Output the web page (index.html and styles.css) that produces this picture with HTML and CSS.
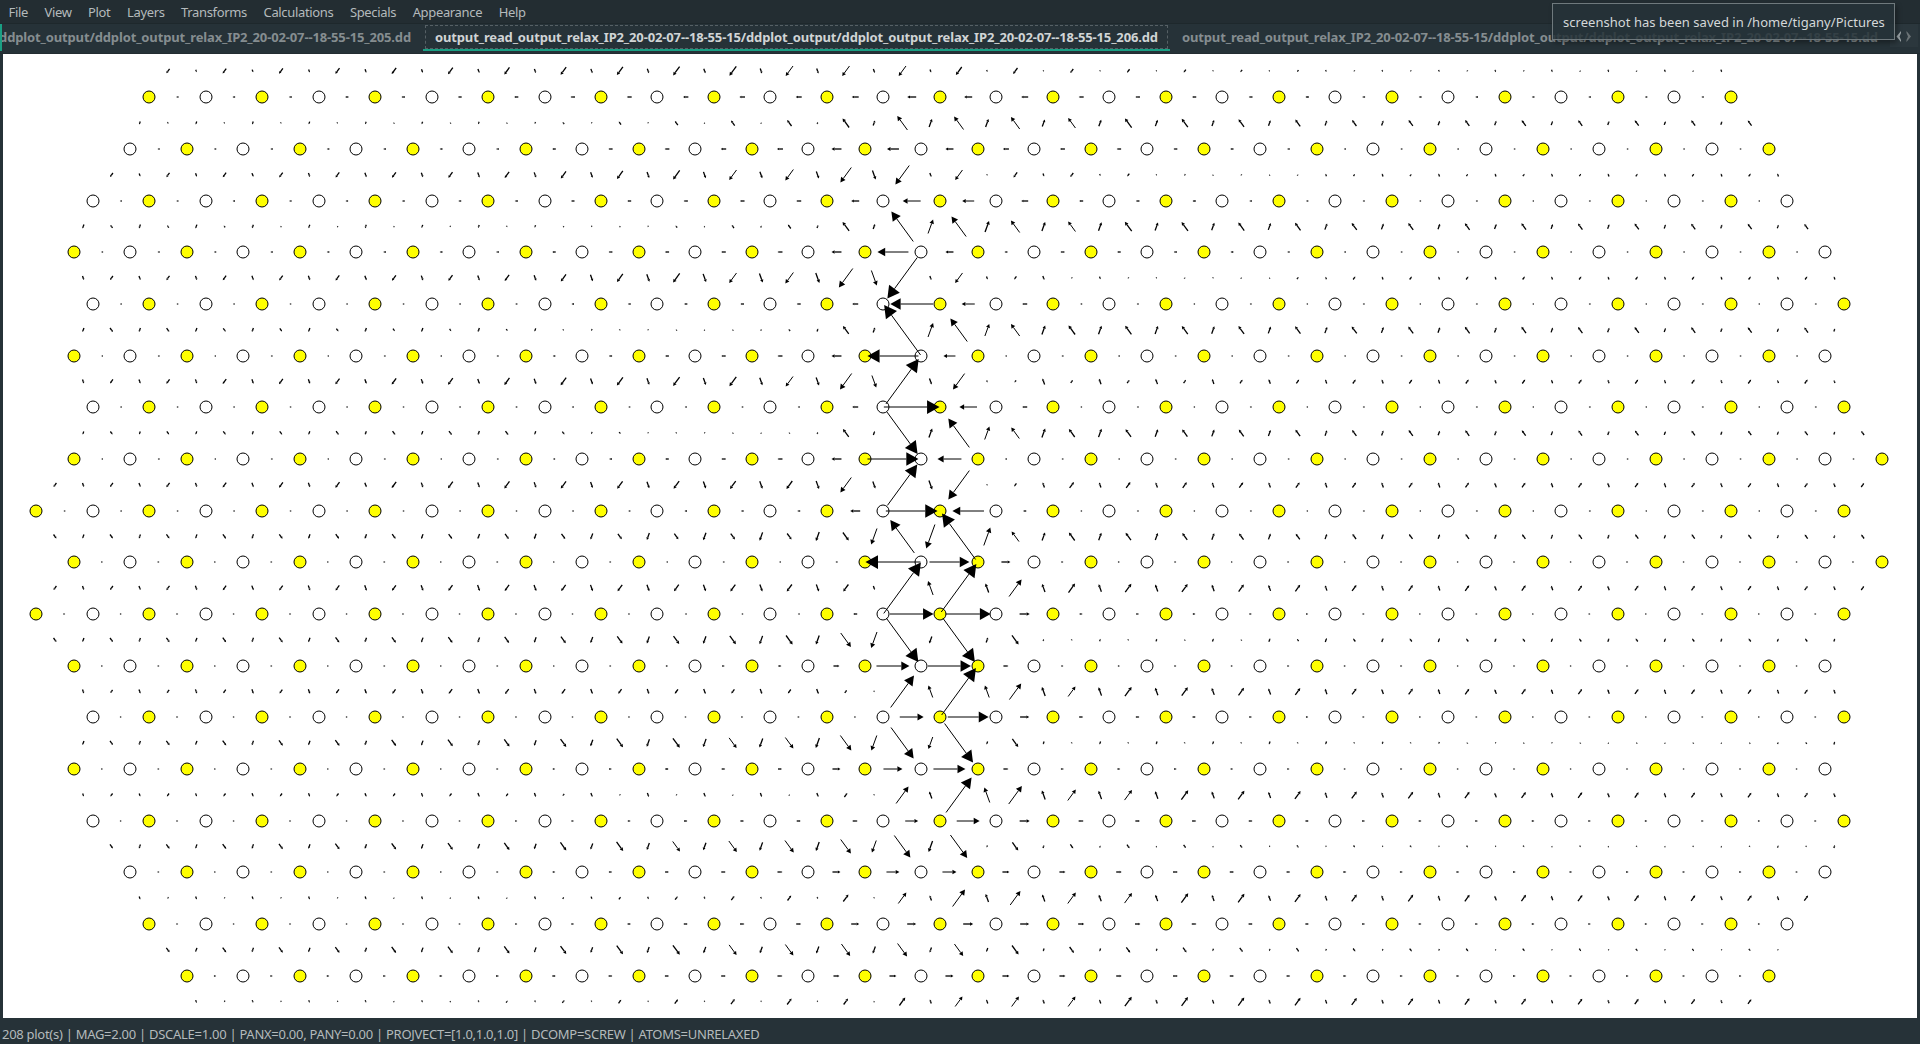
FILE: index.html
```html
<!DOCTYPE html>
<html lang="en">
<head>
<meta charset="utf-8">
<title>ddplot</title>
<link rel="stylesheet" href="styles.css">
</head>
<body>
<div class="window">
  <nav class="menubar">
    <span class="menu">File</span><span class="menu">View</span><span class="menu">Plot</span><span class="menu">Layers</span><span class="menu">Transforms</span><span class="menu">Calculations</span><span class="menu">Specials</span><span class="menu">Appearance</span><span class="menu">Help</span>
  </nav>
  <div class="tabbar">
    <div class="tab tab-first"><span class="label">ddplot_output/ddplot_output_relax_IP2_20-02-07--18-55-15_205.dd</span></div>
    <div class="tab tab-active"><span class="label">output_read_output_relax_IP2_20-02-07--18-55-15/ddplot_output/ddplot_output_relax_IP2_20-02-07--18-55-15_206.dd</span></div>
    <div class="tab tab-last"><span class="label">output_read_output_relax_IP2_20-02-07--18-55-15/ddplot_output/ddplot_output_relax_IP2_20-02-07--18-55-15.dd</span></div>
    <div class="scroller">
      <svg width="28" height="23" viewBox="0 0 28 23"><path class="arrow-on" d="M11 7 6.500 12.500l4.500 5.500V16l-1.500-3.500 1.500-3.500z"/><path class="arrow-off" d="M16.500 7l4.500 5.500-4.500 5.500V16l1.500-3.500-1.500-3.500z"/></svg>
    </div>
  </div>
  <main class="plot"><svg id="plot" width="1914" height="964" viewBox="3 54 1914 964"></svg></main>
  <footer class="status">208 plot(s) | MAG=2.00 | DSCALE=1.00 | PANX=0.00, PANY=0.00 | PROJVECT=[1.0,1.0,1.0] | DCOMP=SCREW | ATOMS=UNRELAXED</footer>
</div>
<div class="toast">screenshot has been saved in /home/tigany/Pictures</div>
<script src="plot.js"></script>
</body>
</html>
```
FILE: styles.css
```css
* { box-sizing: border-box; }
body {
  margin: 0;
  background: #263238;
  color: #b4babc;
  font: 13px/18px "Noto Sans", sans-serif;
  overflow: hidden;
}
.window {
  display: grid;
  grid-template-rows: 24px 30px 964px 26px;
  width: 1920px;
  height: 1044px;
}
.menubar {
  display: flex;
  align-items: center;
  gap: 16.5px;
  padding: 0 8.5px;
  background: #232d32;
  border-bottom: 1px solid #1e282c;
  letter-spacing: -0.34px;
  white-space: nowrap;
}
.tabbar {
  display: flex;
  background: #263238;
  border-bottom: 1px solid #222c31;
  letter-spacing: -0.14px;
  white-space: nowrap;
}
.tab {
  position: relative;
  display: flex;
  align-items: center;
  height: 27px;
  border-bottom: 2px solid transparent;
  font-weight: 700;
  color: #858d90;
}
.tab-first { width: 423px; justify-content: flex-end; padding-right: 12px; }
.tab-first::after {
  content: "";
  position: absolute;
  left: 0;
  top: 0;
  width: 2px;
  height: 27px;
  background: #1a9f84;
}
.tab-active {
  width: 747px;
  padding-left: 12px;
  color: #d0d4d5;
  border-bottom-color: #1a9f84;
}
.tab-active::before {
  content: "";
  position: absolute;
  inset: 1px 2px 0;
  border: 1px dashed #566065;
}
.tab-last { width: 720px; padding-left: 12px; }
.scroller { width: 28px; height: 23px; background: #2b373d; }
.scroller svg { display: block; }
.arrow-on { fill: #9da5a8; }
.arrow-off { fill: #6c7477; }
.plot { margin: 0 3px; background: #fff; }
.plot svg { display: block; }
.status { padding: 7px 2px 0; letter-spacing: -0.28px; white-space: nowrap; }
.toast {
  position: absolute;
  left: 1552px;
  top: 3px;
  width: 343px;
  height: 37px;
  padding: 9px 10px 0;
  border: 1px solid #6f797d;
  background: rgba(38, 50, 56, 0.85);
  box-shadow: 2px 3px 5px rgba(0, 0, 0, 0.35);
  color: #d4d8d9;
  letter-spacing: 0.04px;
  white-space: nowrap;
}
.atom { stroke: #000; stroke-width: 1; fill: #fff; }
.atom-yellow { fill: #ff0; }
.bond { stroke: #000; stroke-width: 1; }
.bond-short { stroke-width: 1.3; }
.head { fill: #000; }
```
FILE: plot.js
```js
// Differential displacement map: atoms on a [111] projected lattice, arrows at bond midpoints.
const DX = 56.49, DY = 51.685, Y0 = 97.15;

// First and last atom of every row; rows -1 and 18 are only bond end points.
const extent = {
  "-1": [187, 1712], 0: [149, 1731], 1: [130, 1769], 2: [93, 1787], 3: [74, 1825],
  4: [93, 1844], 5: [74, 1825], 6: [93, 1844], 7: [74, 1882], 8: [36, 1844],
  9: [74, 1882], 10: [36, 1844], 11: [74, 1825], 12: [93, 1844], 13: [74, 1825],
  14: [93, 1844], 15: [130, 1825], 16: [149, 1787], 17: [187, 1769], 18: [206, 1731]
};

// Per row: [left, mid-left, six core values, mid-right, right], signed pixel length.
const horizontal = [
  [-2,-4, -6,-7,-9,-8,-7,-5, -3,-2], [-2,-3, -6,-10,-12,-8,-6,-5, -2,-1.5],
  [-2,-3, -5,-8,-18,-12,-7,-4, -2,-1.5], [-2,-3, -5,-10,-31,-8,-3,-4, -2,-1],
  [-1.5,-2, -4,-6,-43,-13,-5,-2, -1.5,-1], [-1.5,-2, -5,-10,-51,-12,-1,-2, -1.5,-1],
  [-1,-2, -2,-6,56,-18,-5,-1, -1,-1], [-1,-1.5, -5,-10,51,-24,-2,-1, -1,-1],
  [-1,-1.5, -3,-10,52,-32,-3,-1, -1,-1], [1,1, -1,-2,-55,40,9,2, 1.5,1],
  [1,1, -1,-4,44,45,10,3, 2,1], [1,1, 3,6,33,43,5,2, 2,1],
  [1,1.5, 2,1,24,41,9,4, 2,1.5], [1,2, 4,8,19,32,5,3, 2,1.5],
  [1,2, 4,5,13,23,10,5, 3,2], [1.5,2, 5,8,13,14,7,6, 3,2],
  [1.5,2, 5,8,9,10,9,6, 3,2], [2,3, 5,6,7,8,7,6, 3,2]
];

// Per gap between rows: long-offset bonds, signed vertical extent (down is positive).
const shallow = [
  [4,7, 10,10,10,8,6,4, 1.5,-2], [2,-1, -6,-9,-14,-13,-12,-10, -6,-5],
  [4,6, 11,15,19,10,5,4, -2,-3], [-3,1, -4,-9,-30,-20,-12,-10, -7,-5],
  [4,6, 11,19,41,10,3,1, -3,-3], [4,2, -2,-8,-50,-23,-12,-9, -7,-5],
  [4,7, 10,16,-45,16,2,-3, -4,-4], [3,4, -1,-8,42,-29,-11,-8, -6,-4],
  [4,7, 8,15,-41,29,3,-6, -5,-4], [4,5, 6,8,-33,-46,-10,-8, -5,-4],
  [4,6, 7,7,-51,-48,-17,-9, -6,-4], [4,6, 9,14,44,44,9,1, -3,-3],
  [3,5, 4,-3,-32,-47,-16,-10, -6,-4], [4,7, 11,15,31,39,8,1, 0.5,-2],
  [3,3, -1,-4,-17,-35,-18,-11, -7,-4], [4,7, 12,14,22,23,8,4, 2,1],
  [2,-1, -5,-7,-11,-17,-14,-11, -7,-5], [4,7, 11,12,13,12,9,6, 3,2],
  [3,-2, -6,-6,-8,-10,-10,-10, -7,-4]
];

// Same for the short-offset bonds, five core values.
const steep = [
  [2,4, 5,4,3,2,1, 2,3], [3,2.5, -2,-5,-8,-8,-7, -5,-3],
  [3,5, 7,9,4,1,3, -3,-3], [4,3, -3,-5,-14,-11,-9, -6,-3],
  [4,5, 10,15,4,3,4, -3,-3], [4,4, -3,-5,-14,-12,-9, -6,-3],
  [4,5, 8,12,6,2,-6, -4,-3], [3,4, -2,-4,-9,-13,-9, -5,-3],
  [4,5, 8,7,9,1,-5, -5,-4], [4,5, 9,16,24,-18,-8, -5,-3],
  [4,6, 7,4,-14,-9,-8, -5,-4], [4,5, 9,16,7,-5,-2, -4,-3],
  [4,5, 5,1,-12,-12,-9, -5,-4], [4,5, 10,15,12,3,3, 3,-3],
  [3,4, 4,1,-7,-15,-9, -5,-4], [4,5, 9,12,11,2,-3, 2,-3],
  [3,3, 2,1,-5,-8,-7, -5,-4], [4,5, 7,7,5,4,3, 2,1],
  [3,2, 1,-1,-4,-4,-4, -4,-3]
];

// Linear interpolation between the far field and the dislocation core.
function sample(values, coreStart, x) {
  const n = values.length - 4;
  const knots = [110, 500];
  for (let i = 0; i < n; i++) knots.push(coreStart + DX * i);
  knots.push(1350, 1850);
  if (x <= knots[0]) return values[0];
  for (let i = 1; i < knots.length; i++) {
    if (x <= knots[i]) {
      const t = (x - knots[i - 1]) / (knots[i] - knots[i - 1]);
      return values[i - 1] + t * (values[i] - values[i - 1]);
    }
  }
  return values[values.length - 1];
}

const rowY = i => Math.round(Y0 + DY * i);
const f = v => v.toFixed(2);

function arrow(cx, cy, ux, uy, length) {
  const s = Math.sign(length) || 1, L = Math.max(1.8, Math.abs(length));
  ux *= s; uy *= s;
  const tx = cx + ux * L / 2, ty = cy + uy * L / 2;
  const h = Math.min(12.5, L * 0.22 + 0.9), w = h * 0.55;
  const bx = tx - ux * h, by = ty - uy * h;
  return `<path class="bond${L < 12 ? " bond-short" : ""}" d="M${f(cx - ux * L / 2)} ${f(cy - uy * L / 2)}L${f(bx)} ${f(by)}"/>` +
    `<path class="head" d="M${f(tx)} ${f(ty)}L${f(bx - uy * w)} ${f(by + ux * w)}L${f(bx + uy * w)} ${f(by - ux * w)}z"/>`;
}

const atoms = {};
for (let r = -1; r <= 18; r++) {
  const odd = Math.abs(r) % 2 === 1, base = odd ? 73.85 : 36.1;
  atoms[r] = [];
  for (let k = 0; k < 34; k++) {
    const x = base + DX * k;
    if (x > extent[r][0] - 5 && x < extent[r][1] + 5) atoms[r].push({ x, yellow: k % 2 === 0 });
  }
}

let circles = "", arrows = "";
for (let r = 0; r < 18; r++) {
  const y = rowY(r);
  atoms[r].forEach((a, i) => {
    circles += `<circle class="atom${a.yellow ? " atom-yellow" : ""}" cx="${Math.round(a.x)}" cy="${y}" r="6"/>`;
    if (i + 1 < atoms[r].length) {
      const mx = a.x + DX / 2;
      arrows += arrow(mx, y, 1, 0, sample(horizontal[r], r % 2 ? 780 : 799, mx));
    }
  });
}
for (let g = 0; g <= 18; g++) {
  const y = (rowY(g - 1) + rowY(g)) / 2;
  for (const a of atoms[g - 1]) for (const b of atoms[g]) {
    const dx = b.x - a.x, d = Math.abs(dx);
    if (d > 45) continue;
    const long = d > 28, mx = (a.x + b.x) / 2;
    const len = Math.hypot(dx, DY);
    const v = long ? sample(shallow[g], 789.5, mx) : sample(steep[g], 817.7, mx);
    arrows += arrow(mx, y, dx / len, DY / len, v * len / DY);
  }
}
document.getElementById("plot").innerHTML = circles + arrows;
```
